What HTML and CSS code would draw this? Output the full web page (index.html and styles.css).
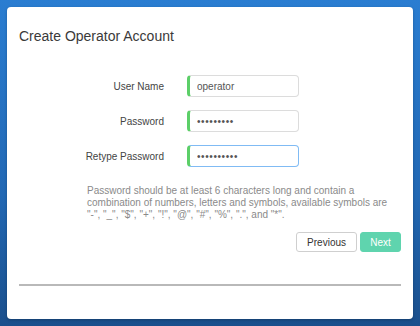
FILE: index.html
```html
<!DOCTYPE html>
<html lang="en">
<head>
    <meta charset="UTF-8">
    <meta name="viewport" content="width=device-width, initial-scale=1.0">
    <title>Create Operator Account</title>
    <link rel="stylesheet" href="styles.css">
</head>
<body>
    <div class="card">
        <h2>Create Operator Account</h2>

        <div class="form">
            <div class="input-group">
                <label for="userName">User Name</label>
                <input type="text" id="userName" value="operator">
            </div>
            <div class="input-group">
                <label for="password">Password</label>
                <input type="password" id="password" value="operator1">
            </div>
            <div class="input-group">
                <label for="retype">Retype Password</label>
                <input type="password" id="retype" class="focused" value="operator12" autofocus>
            </div>
        </div>

        <p class="hint">Password should be at least 6 characters long and contain a combination of numbers, letters and symbols, available symbols are "-", "_", "$", "+", "!", "@", "#", "%", ".", and "*".</p>

        <div class="actions">
            <button class="btn">Previous</button>
            <button class="btn btn-next">Next</button>
        </div>

        <hr class="divider">
    </div>
</body>
</html>
```

FILE: styles.css
```css
html, body {
    height: 100%;
}
body {
    margin: 0;
    padding: 7px;
    box-sizing: border-box;
    font-family: "Liberation Sans", Arial, sans-serif;
    background: linear-gradient(180deg, #2a7dd1 0%, #2268b4 60%, #1a4f8c 100%);
}
.card {
    background-color: #fff;
    border-radius: 4px;
    box-shadow: 0 1px 3px rgba(0,0,0,0.25);
    padding: 21px 12px 34px;
    height: 312px;
    box-sizing: border-box;
}
h2 {
    margin: 0 0 31px;
    font-size: 14px;
    font-weight: normal;
    color: #3a3a3a;
    line-height: 16px;
}
.form {
    display: flex;
    flex-direction: column;
    gap: 13px;
}
.input-group {
    display: flex;
    align-items: center;
}
label {
    width: 145px;
    text-align: right;
    font-size: 10px;
    color: #444;
    margin-right: 23px;
}
input {
    width: 112px;
    height: 22px;
    box-sizing: border-box;
    padding: 0 7px 0 7px;
    border: 1px solid #dcdcdc;
    border-left: 3px solid #5ccf68;
    border-radius: 4px;
    font-family: "Liberation Sans", Arial, sans-serif;
    font-size: 10px;
    color: #555;
    outline: none;
    caret-color: #222;
}
input[type="password"] {
    letter-spacing: 0.6px;
}
input.focused {
    border-color: #80bbf4;
    border-left-color: #5ccf68;
}
.hint {
    margin: 18px 10px 0 68px;
    font-size: 10px;
    line-height: 12px;
    color: #8a8a8a;
}
.actions {
    display: flex;
    justify-content: flex-end;
    gap: 3px;
    margin-top: 11px;
}
.btn {
    height: 20px;
    padding: 0 10px;
    font-family: "Liberation Sans", Arial, sans-serif;
    font-size: 10px;
    color: #333;
    background-color: #fff;
    border: 1px solid #cfcfcf;
    border-radius: 3px;
    cursor: pointer;
}
.btn-next {
    width: 41px;
    padding: 0;
    color: #fff;
    background-color: #5fd4ae;
    border-color: #5fd4ae;
}
.divider {
    margin: 32px 0 0;
    border: none;
    border-top: 2px solid #b9b9b9;
}
```
